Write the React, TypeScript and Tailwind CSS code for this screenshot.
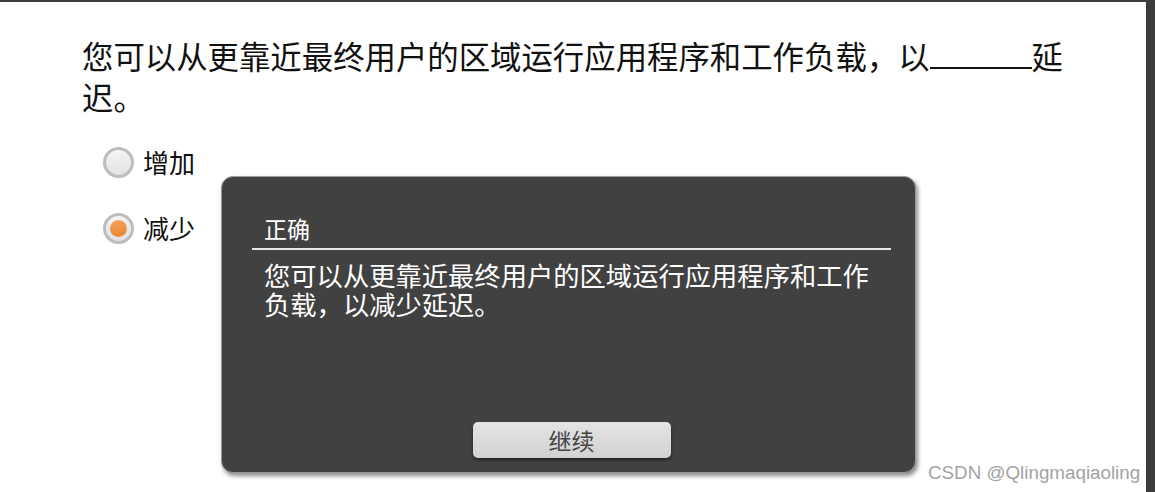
const cjk = { fontFamily: '"Noto Sans CJK SC", "Noto Sans", sans-serif' };

function Radio({ label, checked }: { label: string; checked?: boolean }) {
  return (
    <label className="flex items-center gap-[9px] h-[34px]">
      <span className="flex h-[31px] w-[31px] items-center justify-center rounded-full border-[3px] border-[#bdbdbd] bg-gradient-to-b from-[#f4f4f4] to-[#e2e2e2]">
        {checked && (
          <span className="h-[17px] w-[17px] rounded-full bg-gradient-to-b from-[#f7a25a] to-[#ea8531]" />
        )}
      </span>
      <span className="text-[26px] leading-none text-[#111]">{label}</span>
    </label>
  );
}

export default function App() {
  return (
    <div
      className="relative h-[492px] w-[1155px] overflow-hidden border-t-2 border-[#3c3c3c] bg-white"
      style={cjk}
    >
      <div className="flex h-full">
        {/* Question area */}
        <div className="flex-1 pl-[82px] pt-[33px]">
          <p className="w-[1010px] text-[31.4px] leading-[41px] text-[#111]">
            您可以从更靠近最终用户的区域运行应用程序和工作负载，以
            <span className="inline-block h-[26px] w-[102px] border-b-2 border-[#111] align-baseline" />
            延迟。
          </p>
          <div className="mt-[28px] flex flex-col gap-[32px] pl-[21px]">
            <Radio label="增加" />
            <Radio label="减少" checked />
          </div>
        </div>
        <div className="w-[9px] bg-[#3b3b3b]" />
      </div>

      {/* Feedback dialog */}
      <div className="absolute left-[221px] top-[174px] flex h-[297px] w-[695px] flex-col rounded-[12px] border border-[#9a9a9a] bg-[#414141] shadow-[2px_3px_4px_rgba(0,0,0,0.45)]">
        <div className="ml-[30px] mt-[37px] w-[639px] border-b-2 border-[#e6e6e6] pb-[6px] pl-[12px] text-[23px] leading-[28px] text-white">
          正确
        </div>
        <p className="mt-[10px] w-[667px] pl-[42px] text-[26.3px] leading-[29px] text-white">
          您可以从更靠近最终用户的区域运行应用程序和工作负载，以减少延迟。
        </p>
        <div className="mt-auto mb-[14px] flex justify-center pr-[244px] pl-[250px]">
          <button className="h-[36px] w-[198px] rounded-[5px] bg-gradient-to-b from-[#e4e4e4] to-[#d2d2d2] text-[23px] leading-none text-[#444] shadow-[0_2px_3px_rgba(0,0,0,0.5)]">
            继续
          </button>
        </div>
      </div>

      {/* Watermark */}
      <div
        className="absolute left-[928px] top-[460px] text-[18.8px] leading-[22px] text-[#a3a3a3]"
        style={{ fontFamily: '"Liberation Sans", Arial, sans-serif' }}
      >
        CSDN @Qlingmaqiaoling
      </div>
    </div>
  );
}
